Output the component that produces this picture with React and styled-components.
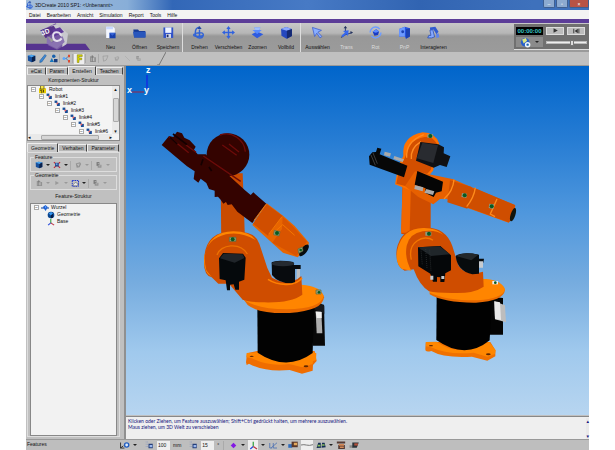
import React from "react";
import { useState } from "react";
import styled, { createGlobalStyle } from "styled-components";


const commands = [
  { label: "Neu", icon: "new" },
  { label: "Öffnen", icon: "folder" },
  { label: "Speichern", icon: "save", divide: true },
  { label: "Drehen", icon: "orbit" },
  { label: "Verschieben", icon: "move" },
  { label: "Zoomen", icon: "zoom" },
  { label: "Vollbild", icon: "cube", divide: true },
  { label: "Auswählen", icon: "pointer" },
  { label: "Trans", icon: "trans", off: true },
  { label: "Rot", icon: "rot", off: true },
  { label: "PnP", icon: "pnp", off: true },
  { label: "Interagieren", icon: "interact" },
];

const drawings = {
  new: <><path d="M6 2h19l5 5v26H6z" fill="#f4f7ff" /><path d="M6 2h19v7H6z" fill="#c9d9ff" /><path d="M15 19h17v15H15z" fill="#1740ae" /><path d="M15 19h17l-9 8z" fill="#3763d5" /></>,
  folder: <><path d="M1 10h13l3 4h17v18H3z" fill="#163a94" /><path d="M0 16h35v16H3z" fill="#2856bc" /></>,
  save: <><path d="M4 4h27v29H4z" fill="#3153c9" /><path d="M9 4h17v15H9z" fill="#eef3ff" /><path d="M11 22h14v11H11z" fill="#d4d9e8" /><path d="M13 24h5v7h-5z" fill="#222b62" /></>,
  orbit: <><path d="M17 3c-14 3-14 27-1 30s16-13 8-14-22 1-22 6 16 6 27 1M18 10v24" fill="none" stroke="#3163d6" strokeWidth="4" /><path d="M18 0l6 8H12z" fill="#24499f" /></>,
  move: <><path d="M18 5v26M5 18h26" stroke="#3163df" strokeWidth="4" /><path d="M18 0l6 8H12zM18 36l6-8H12zM0 18l8-6v12zM36 18l-8-6v12z" fill="#3163df" /></>,
  zoom: <><path d="M2 23l15-8 17 8-17 11z" fill="#2e5be0" /><path d="M9 4h17l-3 7h7L17 22 4 11h8z" fill="#598cff" /><path d="M9 4h17l-3 7H12z" fill="#9fbfff" /></>,
  cube: <><path d="M3 8l14-5 16 5v20l-15 7-14-8z" fill="#2548bf" /><path d="M3 8l14-5 16 5-14 5z" fill="#8caaff" /><path d="M19 13l14-5v20l-14 7z" fill="#162a73" /></>,
  pointer: <path d="M4 4l25 8-10 5 11 12-5 4-9-13-6 9z" fill="#8aafff" stroke="#3355cc" strokeWidth="2" />,
  trans: <><path d="M15 2v22M15 24l19-6M15 24L3 32" stroke="#34477d" strokeWidth="3" /><path d="M8 14l16-2-2 16-5-6-9 9-4-5 10-8z" fill="#3768ee" /><path d="M15 0l5 6H10zM36 18l-7-4v8z" fill="#26345d" /></>,
  rot: <><circle cx="18" cy="18" r="15" fill="none" stroke="#6e9dff" strokeWidth="4" strokeDasharray="36 10" /><path d="M10 16l10-7 8 6-3 10-10 2z" fill="#193cc4" /><path d="M10 16l10-7 8 6-9 4z" fill="#5c8aff" /></>,
  pnp: <><path d="M3 8l16-6 14 4v23l-11 6-3-6H3z" fill="#2555e3" /><path d="M3 8l16-6v27H3z" fill="#6c9aff" /><path d="M22 9l11-3v23l-11 6z" fill="#1c42b2" /><circle cx="13" cy="16" r="4" fill="#1c42b2" /></>,
  interact: <><path d="M8 4l15-2 9 14-6 7-8-13-9 2z" fill="#315bd1" /><path d="M8 12l8-2 5 20-8 3H2l3-7h6z" fill="#85a8ff" stroke="#2349b3" strokeWidth="2" /><path d="M25 22l7-2 2 11-8 2z" fill="#5c83ee" /></>,
  component: <><path d="M3 7l14-4 16 4v20l-14 6-15-6z" fill="#17509d" /><path d="M3 7l14-4 16 4-13 6z" fill="#4ca6ee" /><path d="M20 13l13-6v20l-14 6z" fill="#0a214c" /></>,
  pen: <path d="M28 2l5 5-18 25-8 2 1-8z" fill="#3e88d4" stroke="#155191" strokeWidth="2" />,
  shapes: <><circle cx="19" cy="9" r="7" fill="#1760ac" /><path d="M3 32l8-16 9 16z" fill="#1675bd" /><path d="M20 20h14v13H20z" fill="#163b7c" /></>,
  flow: <><path d="M4 18h12L28 7M16 18l12 11" stroke="#2970bd" strokeWidth="3" fill="none" /><circle cx="8" cy="18" r="6" fill="#59a8ff" /><path d="M24 3h8v10h-8zM24 24h8v10h-8z" fill="#da4c32" /></>,
  feature: <path d="M9 3h20v7H16v6h11v7H16v11H9z" fill="#d8d500" stroke="#7a7900" strokeWidth="2" />,
  gear: <><path d="M8 9h16v4h8v19H8z" fill="#929292" /><path d="M13 15h12v13H13z" fill="#bdbdbd" /><path d="M17 5v25" stroke="#666" strokeWidth="3" /></>,
  sheet: <path d="M5 6l26-2-9 22-14 6z" fill="none" stroke="#929292" strokeWidth="3" />,
  cup: <><path d="M8 11l19-5 5 8-7 14-13 2z" fill="#929292" /><path d="M12 13l14-2-5 14z" fill="#bcbcbc" /></>,
  slash: <path d="M5 5l25 25" stroke="#999" strokeWidth="3" />,
  stack: <><path d="M7 5h13v17H7z" fill="#777" /><path d="M12 17h17v13H12z" fill="#919191" /><path d="M12 12h7M17 22h8" stroke="#c8c8c8" strokeWidth="3" /></>,
  play: <path d="M8 6l22 12L8 30z" fill="currentColor" />,
  skip: <path d="M6 8h4v20H6zM26 8L12 18l14 10zM29 8h4v20h-4z" fill="currentColor" />,
  camera: <><circle cx="17" cy="17" r="14" fill="#255fcb" /><path d="M7 8l12-5 4 9-11 9z" fill="#dce780" /><circle cx="25" cy="25" r="9" fill="#eef7ff" /><circle cx="25" cy="25" r="4" fill="#2468ad" /></>,
  cross: <><path d="M4 5l28 26M32 5L4 31" stroke="#c52636" strokeWidth="5" /><path d="M9 8h17v17H9z" fill="#2c5191" /><path d="M13 11h7v6h-7z" fill="#79aaff" /></>,
  box: <><path d="M5 6h25v23H5z" fill="none" stroke="#1e34ce" strokeWidth="4" strokeDasharray="6 3" /><path d="M9 23l8-9 10 4v9H9z" fill="#e7e9ed" stroke="#555" strokeWidth="2" /></>,
  robot: <><path d="M4 13h28v20H4z" fill="#e6ca00" /><path d="M10 2h14v14H10z" fill="#f5e64f" stroke="#625100" strokeWidth="3" /><path d="M8 21h7v12M22 20v10" stroke="#53470d" strokeWidth="4" fill="none" /></>,
  link: <><path d="M3 3h14v12H3z" fill="#174d98" /><path d="M15 15h15v16H15z" fill="#174d98" /><path d="M12 17l7-5 4 6-8 6z" fill="#e3595f" /></>,
  root: <><path d="M0 18h36" stroke="#1a4da4" strokeWidth="5" /><path d="M8 13l12-8 10 9-9 17z" fill="#1c61d4" /><path d="M18 8l7 6-7 6z" fill="#65a0ff" /></>,
  sphere: <><circle cx="18" cy="18" r="15" fill="#0a458f" /><path d="M7 10l12-6 8 8-10 8z" fill="#3998f0" /><path d="M17 20l10-8v18l-9 3z" fill="#061c43" /></>,
  axes: <><path d="M17 3v19" stroke="#35a344" strokeWidth="5" /><path d="M17 22L5 32" stroke="#294bdd" strokeWidth="5" /><path d="M17 22l15 10" stroke="#bc3545" strokeWidth="5" /></>,
  grid: <><path d="M3 4h9M3 13h9M3 22h9" stroke="#8293bd" strokeWidth="3" strokeDasharray="3 3" /><path d="M14 11h17v18H14z" fill="#253f7b" /><path d="M18 16h11v9H18z" fill="#9cb8ed" /></>,
  view: <><path d="M2 9v20h14M2 29l10-8" stroke="#222" strokeWidth="3" fill="none" /><circle cx="24" cy="18" r="10" fill="#235ec0" /><circle cx="24" cy="18" r="5" fill="#dcecff" /></>,
  dot: <path d="M18 7l11 11-11 11L7 18z" fill="#8319e4" />,
  curves: <path d="M3 8v20h10M17 8v20h15M9 27L32 7" stroke="#416ab0" strokeWidth="3" fill="none" />,
  tools: <><path d="M1 15h14v13H1z" fill="#306cbc" /><path d="M13 6h22v20H13z" fill="#593629" /><path d="M21 10h12v9H21z" fill="#e2a85d" /></>,
  signal: <><path d="M2 19h12v9H2z" fill="#888" /><path d="M12 9h23l-7 19H12z" fill="#2c3439" /><path d="M19 12h13v8H19z" fill="#b4513b" /></>,
  wire: <path d="M0 18c12-4 21 5 36-1" stroke="#777" strokeWidth="3" fill="none" />,
  binocular: <><path d="M2 29L8 10h9l1 18zM20 28l2-18h9l4 16z" fill="#132c55" /><path d="M7 17h9v6H5zM22 15h9v6h-9z" fill="#8bc05c" /></>,
  machine: <><path d="M3 5h30v8H3zM8 18h24v14H8z" fill="#553b35" /><path d="M10 14h19v7H10zM14 23h14v6H14z" fill="#d58b58" /></>,
};

const Icon = ({ name, size = 9 }) => (
  <Drawing viewBox="0 0 36 36" $size={size} aria-hidden="true">{drawings[name]}</Drawing>
);

const Arrow = ({ off }) => <Caret $off={off} aria-hidden="true" />;

const Logo = () => (
  <Brand viewBox="0 0 210 87" aria-label="3DCreate logo">
    <path d="M0 62h178l14 19H0z" fill="#56348f" />
    <path d="M43 23L89 1l31 30 3 31-30 18-27-13 18-15-23-16z" fill="#765aa2" />
    <path d="M75 9l18-6 33 29-4 31-13 9V44z" fill="#c9c9ce" />
    <path d="M43 22L83 8l10 15-34 23z" fill="#563488" />
    <path d="M63 38l14 21 33-19 6 17-23 20-31-15z" fill="#8a73b1" />
    <path d="M79 20l23-7 12 14-28 13z" fill="#5f3a99" />
    <path d="M82 45c-7-23 22-20 23-7M81 42c3 15 18 16 26 4" fill="none" stroke="#e5e0ed" strokeWidth="6" />
    <text x="46" y="34" transform="rotate(-22 58 28)" fill="#fff" fontSize="20" fontWeight="bold">3D</text>
  </Brand>
);

const Robots = () => (
  <Scene viewBox="126 66 463 349" preserveAspectRatio="xMidYMid meet" role="img" aria-label="Robot 3D">
    <g fontFamily="Liberation Sans, Arial, sans-serif" fontSize="9" fontWeight="bold" fill="#f4fbff">
      <path d="M147 75v14" stroke="#1712ec" />
      <path d="M132 92h12" stroke="#9a2445" />
      <text x="146" y="73">z</text><text x="127" y="93">x</text><text x="144" y="93">y</text>
    </g>
    <g transform="translate(195 180) scale(.333333)">
      <path d="M77-20h66l8 230H79z" fill="#c94b00" />
      <g fill="#340300">
        <circle cx="99" cy="-76" r="64" />
        <path d="M-100-105l22-27 13 3 11-16 15 5 7 13 16 8 18 19-5 9 11 14h24L150 31l17 14 8-8 39 34-42 58-45-34-17-22-12 2-5-9-8 5-8-12-8-9-10 1v-19l-17-5-8-18-17-13-7 12-14-11 3-23-23-15z" />
      </g>
      <path d="M-78-130l59 48M-27-105l30 22M25-72l112 76M75-135a58 58 0 0 1 76 50M82-105l43 31M102-108l30 24" stroke="#6d0b09" strokeWidth="4" fill="none" />
      <path d="M-75-128l22 20m-13-30l42 32m48 44l-6 18m24 5l8 12" stroke="#140000" strokeWidth="5" />
      <path d="M215 70l50 38 34 30 43 50-4 14-30 30-44-14-92-83z" fill="#e86500" />
      <path d="M215 73l48 35-44 59-45-36z" fill="#d04e00" />
      <path d="M263 110l29 27 44 48-32 43-72-40 29-41z" fill="#d95400" />
      <path d="M213 73l-36 48M261 110l-40 53M240 155l23-21 36 32" stroke="#f47600" strokeWidth="3" fill="none" />
      <ellipse cx="327" cy="211" rx="9" ry="21" transform="rotate(37 327 211)" fill="#080b0c" />

      <path d="M156 520l30-7h173l6 30-11 12-1 17-32 9-37-11q-76 7-122-19l-7 4-2-8z" fill="#ef6d00" />
      <path d="M155 519l32-2q70 52 167-2l10 5-1 20-9 4-1 8-31 10-40-10q-63 8-111-17l-17-3z" fill="#ff8500" />
      <path d="M350 370l37 4 3 123h-37z" fill="#080808" />
      <path d="M187 382h170l-4 137q-78 57-165-1z" fill="#020202" />
      <path d="M355 372l9-10 24 15v24l-28-12z" fill="#17191c" />
      <path d="M362 394l17 1 3 65h-17z" fill="#adadad" /><path d="M362 395l18 1v18h-15z" fill="#eee" />
      <path d="M143 354q75-45 180-36 61 10 64 34-3 40-103 47-92 3-126-24z" fill="#e96900" />
      <path d="M143 350q71-39 177-36 56 4 66 34-8 38-111 40-87 0-132-30z" fill="#ff8500" />
      <path d="M50 292Q22 286 28 228q7-73 86-74 67-2 79 37l24 73 14 29q49 28 88-5l3 56q-35 25-114 23-43 0-65-8l-41-48H70z" fill="#cf4d00" />
      <path d="M34 271q-22-88 59-108 44-10 89 17-18-26-67-26-72 0-87 75-5 48 22 62z" fill="#ff8600" />
      <path d="M66 225c9-32 70-40 91-3" stroke="#ed7100" strokeWidth="4" fill="none" />
      <path d="M72 235l12-16 60 2 8 12-4 66-16 6v24h-11l-5-16-11 1v17h-9l-4-30-18-4z" fill="#05090c" />
      <path d="M75 235l11-14 57 2 5 11-29 14z" fill="#20252a" />
      <path d="M230 247q16-9 65-1l2 9h20v12h-17v43q-48 3-69-25z" fill="#080b0e" />
      <ellipse cx="264" cy="251" rx="34" ry="8" fill="#252a30" />
      <path d="M305 267h10v23l-10 9z" fill="#b9bdc2" />
      <path d="M219 298q24 16 57 15 30 0 45-19" fill="none" stroke="#ff7f00" strokeWidth="5" />
      <g fill="#9e9d77" stroke="#506b42" strokeWidth="2"><path d="M103 172h20v12h-20zM238 151l17 4-3 13-16-4zM309 207l13-6 2 12-13 7zM363 330h15v12h-15z" /></g>
      <g fill="#075b22"><circle cx="113" cy="178" r="6" /><circle cx="246" cy="159" r="6" /><circle cx="317" cy="210" r="4" /><circle cx="372" cy="337" r="4" /></g>
      <g fill="#602700"><ellipse cx="170" cy="529" rx="6" ry="2" /><ellipse cx="333" cy="559" rx="7" ry="3" /></g>
    </g>
    <g transform="translate(390 200) scale(.333333)">
      <path d="M38-58l84 7v160l-88-7z" fill="#cf4d00" /><path d="M38-53h25L59 98H33z" fill="#f06600" />
      <path d="M107 427l30-1h164l15 24v19l-24 13-46-12q-85 5-122-17-18 5-18-5z" fill="#f07100" />
      <path d="M108 426l32-1q66 50 157 0l20 26-2 11-23 8-41-12q-76 8-130-17l-13-2z" fill="#ff8700" />
      <path d="M301 290l38 4v110h-42z" fill="#040404" />
      <path d="M140 286h166l-7 135q-73 60-160-1z" fill="#010101" />
      <path d="M313 304l32 12 3 51-33-9z" fill="#bdbdbd" /><path d="M313 304l17 3 3 53-18-3z" fill="#e9e9e9" />
      <path d="M119 277q75-42 172-37 48 7 54 30-4 33-87 38-94 1-139-25z" fill="#e96a00" />
      <path d="M119 272q75-36 170-35 48 5 56 32-8 26-82 32-93 1-144-23z" fill="#ff8500" />
      <path d="M44 212Q15 199 20 148q12-62 73-65 72-7 94 55l18 58q21 34 74 19l2 45q-32 22-95 19-49 0-69-5-29-18-46-66z" fill="#cf4d00" />
      <path d="M36 207Q14 188 22 149q15-63 77-65 42-1 61 21-24-17-62-11-39 6-48 43-7 38 14 75z" fill="#ff8300" />
      <path d="M64 179c-13-54 39-78 65-58" stroke="#f47600" strokeWidth="4" fill="none" />
      <path d="M84 142l67-4 32 28v45l-17 9-3 26h-12v-14l-10-1v14h-12l-8-24-36-22z" fill="#050709" />
      <path d="M84 142l65-3 31 24-57 5z" fill="#20262a" />
      <path d="M119 149l4 65m-30-66l4 48m10-49l4 58" stroke="#34383a" strokeWidth="2" strokeDasharray="3 3" />
      <path d="M197 168q18-14 70-4v12h15l-2 12-13 3v30l-20 2q-45-10-50-55z" fill="#070b0d" />
      <path d="M198 168q25-14 67-4l-21 17z" fill="#23282b" /><path d="M267 184h12v19h-12zM121 227h9v12h-9zM154 228h9v9h-9z" fill="#c6cbd0" />
      <g transform="translate(-75 -225)">
        <path d="M115 93q-6-58 58-71 37 0 50 34l-19 81-54 65-60-24 11-59z" fill="#ff7100" />
        <path d="M122 92q12-58 73-57 16 10 26 30l-24 70-50 55-53-14 8-39z" fill="#d34f00" />
        <path d="M125 98q-3-48 51-69M139 102q-3-33 29-52" fill="none" stroke="#ff8b20" strokeWidth="4" />
        <path d="M150 139l115 24 34 15 152 63-4 33-16 19-125-45-63-27-18 1-20 16-45-22-40-33z" fill="#e76000" />
        <path d="M255 166l63 19 9 9-20 57-60-19z" fill="#cf4e00" />
        <path d="M327 188l123 52-7 42-12 10-125-45z" fill="#cf4e00" />
        <path d="M267 164q-3 35-30 58M331 188q-4 30-26 57M396 222l-20 45 14 8" stroke="#ff8b1b" strokeWidth="4" fill="none" />
        <path d="M166 51l54 7 17 9-1 18 20 9-11 32-20-6-19 8-53-21z" fill="#101114" />
        <path d="M172 53l47 8-14 53-50-14z" fill="#292b30" />
        <path d="M37 68l12 3-5 17 83 34-10 35-103-38-2-25 10-12 11-1z" fill="#070707" />
        <path d="M157 138l77 32-4 29-17 4-7 13-26-13 2-13-33-11z" fill="#050505" />
        <path d="M59 80l19 5-3 10-18-4zM88 93l29 10-4 8-28-9zM150 181l25 6-2 12-25-7zM184 192l24 7-4 11-26-7z" fill="#aaa" />
        <path d="M18 90l13 31m-7-37l13 32" stroke="#3b3b3b" strokeWidth="3" />
        <ellipse cx="444" cy="269" rx="7" ry="21" transform="rotate(18 444 269)" fill="#11150e" />
        <path d="M187 27h17v11h-17zM291 204l15 2-2 13-15-3zM373 236l15 2-3 14-14-3zM181 320h18v12h-18z" fill="#8d977d" />
        <g fill="#075b22"><circle cx="196" cy="33" r="6" /><circle cx="299" cy="211" r="6" /><circle cx="380" cy="244" r="6" /><circle cx="192" cy="326" r="6" /></g>
      </g>
      <path d="M307 243h17v10h-17z" fill="#eee" /><circle cx="316" cy="248" r="4" fill="#075b22" />
      <g fill="#602700"><ellipse cx="123" cy="437" rx="6" ry="2" /><ellipse cx="295" cy="463" rx="7" ry="3" /></g>
    </g>
  </Scene>
);

const App = () => {
  const [position, setPosition] = useState(65);
  const [gridSize, setGridSize] = useState("100");
  const [angle, setAngle] = useState("15");

  return (
    <>
      <GlobalStyle />
      <Page>
        <TitleBar>
          <Icon name="orbit" size={8} />
          <h1>3DCreate 2010 SP1: &lt;Unbenannt&gt;</h1>
          <WindowButton aria-label="Minimieren">–</WindowButton>
          <WindowButton aria-label="Maximieren">▫</WindowButton>
          <WindowButton aria-label="Schließen" $close>×</WindowButton>
        </TitleBar>
        <Menu>
          {["Datei", "Bearbeiten", "Ansicht", "Simulation", "Report", "Tools", "Hilfe"].map(item => <button key={item}>{item}</button>)}
        </Menu>
        <Toolbar>
          <Logo />
          {commands.map(item => (
            <Command key={item.label} $off={item.off} $divide={item.divide}>
              <Icon name={item.icon} size={13} />
              <span>{item.label}</span>
            </Command>
          ))}
          <Playback>
            <PlayRow>
              <Clock>00:00:00</Clock>
              <PlayButton aria-label="Abspielen"><Icon name="play" size={7} /></PlayButton>
              <PlayButton aria-label="Zurücksetzen"><Icon name="skip" size={8} /></PlayButton>
            </PlayRow>
            <PlayRow>
              <CameraButton aria-label="Aufnahme"><Icon name="camera" size={11} /><Arrow /></CameraButton>
              <Slider type="range" aria-label="Geschwindigkeit" value={position} onChange={event => setPosition(event.target.value)} />
            </PlayRow>
          </Playback>
        </Toolbar>
        <Tools>
          {["component", "pen", "shapes"].map(name => <ToolButton key={name} aria-label={name}><Icon name={name} /></ToolButton>)}
          <ToolDivider />
          <ToolButton aria-label="flow"><Icon name="flow" /></ToolButton>
          <ToolDivider />
          <ToolButton aria-label="feature" $active><Icon name="feature" /></ToolButton>
          <ToolDivider />
          <ToolButton aria-label="gear"><Icon name="gear" /></ToolButton>
          <ToolDivider />
          {["sheet", "cup", "slash", "stack"].map(name => <ToolButton key={name} aria-label={name} $small={name !== "sheet"}><Icon name={name} size={7} /></ToolButton>)}
          <ToolEnd viewBox="0 0 9 13"><path d="M0 13h2L9 0" fill="none" stroke="#777" /></ToolEnd>
        </Tools>
        <Main>
          <Sidebar>
            <Tabs>
              {["eCat", "Param", "Erstellen", "Teachen"].map(tab => <Tab key={tab} $active={tab === "Erstellen"}>{tab}</Tab>)}
            </Tabs>
            <PanelTitle>Komponenten-Struktur</PanelTitle>
            <TreeBox>
              <Tree>
                <TreeRow><Toggle aria-label="Robot">−</Toggle><Icon name="robot" />Robot</TreeRow>
                {[1, 2, 3, 4, 5, 6].map(number => (
                  <TreeRow key={number} $level={number}><Toggle aria-label={"link#" + number}>−</Toggle><Icon name="link" size={7} />link#{number}</TreeRow>
                ))}
              </Tree>
              <Scrollbar><i>▴</i><Thumb /><i>▾</i></Scrollbar>
              <Scrollbar $horizontal><i>◂</i><Thumb $horizontal /><i>▸</i></Scrollbar>
            </TreeBox>
            <Tabs $lower>
              {["Geometrie", "Verhalten", "Parameter"].map(tab => <Tab key={tab} $active={tab === "Geometrie"}>{tab}</Tab>)}
            </Tabs>
            <Properties>
              <Group>
                <legend>Feature</legend>
                <ToolButton aria-label="Feature hinzufügen"><Icon name="component" size={8} /></ToolButton><Arrow />
                <ToolButton aria-label="Feature bearbeiten"><Icon name="cross" size={8} /></ToolButton><Arrow />
                <ToolDivider />
                <ToolButton aria-label="Feature gruppieren"><Icon name="cup" size={8} /></ToolButton><Arrow off />
                <ToolDivider />
                <ToolButton aria-label="Feature stapeln"><Icon name="stack" size={8} /></ToolButton><Arrow off />
              </Group>
              <Group>
                <legend>Geometrie</legend>
                <ToolButton aria-label="Geometrie umkehren"><Icon name="gear" size={8} /></ToolButton><Arrow off />
                <ToolButton aria-label="Geometrie ausführen" $off><Icon name="play" size={6} /></ToolButton><Arrow off />
                <ToolButton aria-label="Geometrie auswählen"><Icon name="box" size={9} /></ToolButton><Arrow />
                <ToolDivider />
                <ToolButton aria-label="Geometrie stapeln"><Icon name="stack" size={8} /></ToolButton><Arrow off />
              </Group>
              <PanelTitle $feature>Feature-Struktur</PanelTitle>
              <FeatureTree>
                <TreeRow><Toggle aria-label="Wurzel">−</Toggle><Icon name="root" size={8} />Wurzel</TreeRow>
                <TreeRow $leaf><Icon name="sphere" size={8} />Geometrie</TreeRow>
                <TreeRow $leaf><Icon name="axes" size={8} />Base</TreeRow>
              </FeatureTree>
            </Properties>
          </Sidebar>
          <Workspace>
            <Viewport><Robots /></Viewport>
            <Messages>
              <div>
                <p>Klicken oder Ziehen, um Feature auszuwählen; Shift+Ctrl gedrückt halten, um mehrere auszuwählen.</p>
                <p>Maus ziehen, um 3D Welt zu verschieben</p>
              </div>
              <Scrollbar><i>▴</i><i>▾</i></Scrollbar>
            </Messages>
          </Workspace>
        </Main>
        <Status>
          <StatusText>Features</StatusText>
          <StatusTools>
            <ToolButton aria-label="Ansicht"><Icon name="view" size={10} /></ToolButton><Arrow />
            <StatusLabel><Icon name="grid" /><StatusInput aria-label="Rastergröße" value={gridSize} onChange={event => setGridSize(event.target.value)} /><span>mm</span></StatusLabel>
            <StatusLabel><Icon name="grid" /><StatusInput aria-label="Winkel" value={angle} onChange={event => setAngle(event.target.value)} /><span>°</span></StatusLabel>
            <StatusDivider />
            <ToolButton aria-label="Punkt"><Icon name="dot" /></ToolButton><Arrow />
            <ToolButton aria-label="Achsen" $active><Icon name="axes" /></ToolButton><Arrow />
            <ToolButton aria-label="Kurven"><Icon name="curves" /></ToolButton><Arrow />
            <ToolButton aria-label="Werkzeuge"><Icon name="tools" size={10} /></ToolButton>
            <ToolButton aria-label="Linie" $active><Icon name="wire" size={12} /></ToolButton>
            <ToolButton aria-label="Suchen"><Icon name="binocular" size={10} /></ToolButton><Arrow />
            <ToolButton aria-label="Maschine"><Icon name="machine" size={10} /></ToolButton>
            <ToolButton aria-label="Signal"><Icon name="signal" size={10} /></ToolButton>
          </StatusTools>
        </Status>
      </Page>
    </>
  )
}


const GlobalStyle = createGlobalStyle`
  * {
    box-sizing: border-box;
  }
  body {
    margin: 0;
    background: #fff;
    color: #111;
    font: 5px/8px "Liberation Sans", Arial, sans-serif;
  }
  button, input {
    font: inherit;
    color: inherit;
    padding: 0;
    margin: 0;
  }
  button {
    border: 0;
    background: none;
    white-space: nowrap;
  }
  p, h1 {
    margin: 0;
    font: inherit;
  }
`;

const Page = styled.div`
  display: flex;
  flex-direction: column;
  min-height: 100vh;
  margin: 0 26px;
  background: #c0c0c0;
`;

const Drawing = styled.svg`
  display: block;
  flex: none;
  width: ${props => props.$size}px;
  height: ${props => props.$size}px;
`;

const TitleBar = styled.header`
  display: flex;
  align-items: center;
  gap: 1px;
  height: 10px;
  background: linear-gradient(90deg, #a4bdd9 0, #88aed8 18%, #3267b7 26%, #477ac5 50%, #3164b2 70%, #3e71bc 90%);
  h1 {
    flex: 1;
  }
`;

const WindowButton = styled.button`
  align-self: flex-start;
  width: ${props => props.$close ? 20 : 12}px;
  height: 8px;
  border: 1px solid #3e5f91;
  border-top: 0;
  border-radius: 0 0 2px 2px;
  background: ${props => props.$close ? "#b85345" : "#8caad0"};
  color: #fff;
  line-height: 6px;
`;

const Menu = styled.nav`
  display: flex;
  gap: 6px;
  height: 9px;
  padding: 0 3px;
  background: #f3f3f3;
`;

const Toolbar = styled.div`
  display: flex;
  height: 33px;
  border-top: 4px solid #5c3d98;
  background: linear-gradient(#c8c8c8, #b6b6b6 35%, #989898 45%, #9b9b9b);
`;

const Brand = styled.svg`
  flex: none;
  width: 70px;
  height: 29px;
`;

const Command = styled.button`
  display: flex;
  flex-direction: column;
  align-items: center;
  gap: 4px;
  width: 29px;
  margin-right: ${props => props.$divide ? 2 : 0}px;
  padding-top: 3px;
  border-right: ${props => props.$divide ? "1px solid #ddd" : 0};
  color: ${props => props.$off ? "#ddd" : "#111"};
`;

const Playback = styled.section`
  display: flex;
  flex-direction: column;
  gap: 2px;
  width: 75px;
  height: 26px;
  margin: 1px 0 0 auto;
  padding: 2px;
  border: 1px solid #ddd;
  border-width: 0 0 1px;
  background: #707070;
`;

const PlayRow = styled.div`
  display: flex;
  align-items: center;
  gap: 3px;
  height: 10px;
`;

const Clock = styled.time`
  width: 27px;
  background: #000;
  color: #38c8c8;
  font: bold 6px/8px "Liberation Sans", Arial, sans-serif;
  text-align: center;
`;

const PlayButton = styled.button`
  display: flex;
  align-items: center;
  justify-content: center;
  width: 18px;
  height: 8px;
  border: 1px solid #ddd;
  background: #bcbcbc;
  color: #333;
`;

const CameraButton = styled(PlayButton)`
  gap: 4px;
  width: 27px;
  height: 10px;
  border: 0;
  background: #8b8b8b;
`;

const Slider = styled.input`
  flex: 1;
  min-width: 0;
  height: 8px;
  appearance: none;
  background: transparent;
  &::-webkit-slider-runnable-track {
    height: 3px;
    border: 1px solid #bbb;
    background: #eee;
  }
  &::-webkit-slider-thumb {
    appearance: none;
    width: 4px;
    height: 6px;
    margin-top: -2px;
    border: 1px solid #777;
    background: #ddd;
  }
`;

const Caret = styled.span`
  flex: none;
  border: 2px solid transparent;
  border-top-color: ${props => props.$off ? "#999" : "#222"};
  border-bottom: 0;
`;

const Tools = styled.div`
  display: flex;
  align-items: center;
  gap: 1px;
  height: 14px;
  border-bottom: 1px solid #999;
`;

const ToolButton = styled.button`
  display: flex;
  align-items: center;
  justify-content: center;
  flex: none;
  min-width: 10px;
  height: 10px;
  color: ${props => props.$off ? "#999" : "#222"};
  background: ${props => props.$active ? "#eee" : "transparent"};
  opacity: ${props => props.$small ? .6 : 1};
`;

const ToolDivider = styled.span`
  width: 1px;
  height: 9px;
  border-left: 1px solid #aaa;
`;

const ToolEnd = styled.svg`
  width: 9px;
  height: 13px;
  margin-left: 13px;
`;

const Main = styled.main`
  display: flex;
  flex: 1;
`;

const Sidebar = styled.aside`
  display: flex;
  flex-direction: column;
  width: 100px;
  padding: 0 4px 2px 1px;
  border-right: 2px solid #909090;
`;

const Tabs = styled.div`
  display: flex;
  align-items: flex-end;
  height: 9px;
  margin-top: ${props => props.$lower ? 2 : 0}px;
`;

const Tab = styled.button`
  height: ${props => props.$active ? 9 : 8}px;
  padding: 0 3px;
  border: 1px solid #eee;
  border-right-color: #444;
  border-bottom: ${props => props.$active ? 0 : "1px solid #ddd"};
  background: ${props => props.$active ? "#c6c6c6" : "#b8b8b8"};
  line-height: 7px;
`;

const PanelTitle = styled.h2`
  margin: 0;
  font: inherit;
  line-height: ${props => props.$feature ? 13 : 10}px;
  text-align: center;
`;

const TreeBox = styled.div`
  display: grid;
  grid-template-columns: 1fr 7px;
  grid-template-rows: 1fr 6px;
  height: 56px;
  border: 1px solid #888;
  background: #f4f4f4;
`;

const Tree = styled.div`
  overflow: hidden;
`;

const TreeRow = styled.div`
  display: flex;
  align-items: center;
  gap: 2px;
  height: 7px;
  padding-left: ${props => props.$leaf ? 16 : 3 + (props.$level || 0) * 8}px;
  line-height: 7px;
`;

const Toggle = styled.button`
  width: 5px;
  height: 5px;
  border: 1px solid #aaa;
  background: #fff;
  line-height: 3px;
`;

const Scrollbar = styled.div`
  display: flex;
  flex-direction: ${props => props.$horizontal ? "row" : "column"};
  align-items: center;
  justify-content: space-between;
  background: #e9e9e9;
  i {
    font: 5px/6px "DejaVu Sans", sans-serif;
  }
`;

const Thumb = styled.span`
  width: ${props => props.$horizontal ? 58 : 6}px;
  height: ${props => props.$horizontal ? 5 : 24}px;
  border: 1px solid #aaa;
  border-radius: 1px;
  background: #d6d6d6;
`;

const Properties = styled.div`
  display: flex;
  flex-direction: column;
  flex: 1;
  padding: 1px 2px 0;
  border: 1px solid #ddd;
`;

const Group = styled.fieldset`
  display: flex;
  align-items: center;
  gap: 2px;
  min-width: 0;
  height: 18px;
  margin: 0;
  padding: 0 3px 2px;
  border: 1px solid #ddd;
  legend {
    padding: 0 1px;
    line-height: 6px;
  }
`;

const FeatureTree = styled.div`
  flex: 1;
  border: 1px solid #888;
  background: #f2f2f2;
`;

const Workspace = styled.section`
  display: flex;
  flex-direction: column;
  flex: 1;
  min-width: 0;
`;

const Viewport = styled.div`
  display: flex;
  flex: 1;
  background: linear-gradient(#0065cb, #247bd3 20%, #4f97dd 42%, #76acdf 62%, #a0c9ed 82%, #b7d5f0);
`;

const Scene = styled.svg`
  width: 100%;
`;

const Messages = styled.section`
  display: flex;
  justify-content: space-between;
  height: 23px;
  margin-top: 1px;
  padding: 1px 0 0 2px;
  border-top: 1px solid #888;
  background: #efefef;
  color: #14147d;
  font-family: Lato, "Liberation Sans", sans-serif;
  p {
    line-height: 6px;
  }
`;

const Status = styled.footer`
  display: flex;
  height: 11px;
  border-top: 1px solid #999;
  background: #bebebe;
`;

const StatusText = styled.span`
  width: 94px;
  padding-left: 1px;
  line-height: 9px;
`;

const StatusTools = styled.div`
  display: flex;
  align-items: center;
  gap: 3px;
`;

const StatusLabel = styled.label`
  display: flex;
  align-items: center;
  gap: 3px;
  margin-left: 5px;
`;

const StatusInput = styled.input`
  width: 13px;
  height: 9px;
  padding-left: 1px;
  border: 0;
  background: #eee;
`;

const StatusDivider = styled(ToolDivider)`
  margin: 0 1px;
`;


export default App;
